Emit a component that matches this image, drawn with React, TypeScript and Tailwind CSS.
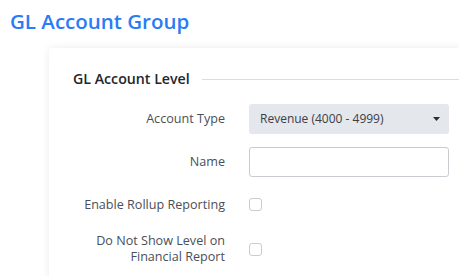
const font = { fontFamily: "'Open Sans', 'Noto Sans', sans-serif" };

const Row = ({ label, children, h }: { label: React.ReactNode; children: React.ReactNode; h: string }) => (
  <div className={`flex items-center gap-6 ${h}`}>
    <div className="w-[152px] shrink-0 text-right text-[12.6px] leading-[16px] text-[#4a4f57]">{label}</div>
    <div className="flex items-center">{children}</div>
  </div>
);

const Checkbox = () => (
  <div className="h-[13px] w-[13px] rounded-[3px] border border-[#c9ccd1] bg-white" />
);

export default function App() {
  return (
    <div className="h-[276px] w-[459px] overflow-hidden bg-white" style={font}>
      <h1 className="pl-[10px] pt-[7px] text-[20.5px] font-semibold leading-[28px] text-[#2a7bf6]">
        GL Account Group
      </h1>
      <div className="ml-[49px] mt-[13px] w-[440px] rounded-[3px] bg-white px-6 pb-8 pt-[22px] shadow-[0_0_8px_rgba(0,0,0,0.08)]">
        <div className="flex items-center gap-[12px]">
          <h2 className="text-[14.2px] font-semibold leading-[18px] text-[#22262b]">GL Account Level</h2>
          <div className="h-px flex-1 bg-[#d5dcea]" />
        </div>
        <div className="mt-[9px]">
          <Row label="Account Type" h="h-[43px]">
            <div className="flex h-[30px] w-[200px] items-center justify-between rounded-[3px] bg-[#e4e7eb] pl-[11px] pr-[9px] text-[12px] text-[#3b4047]">
              <span>Revenue (4000 - 4999)</span>
              <svg width="7" height="4" viewBox="0 0 7 4"><path d="M0 0h7L3.5 4z" fill="#2b2f35" /></svg>
            </div>
          </Row>
          <Row label="Name" h="h-[43px]">
            <div className="h-[30px] w-[200px] rounded-[3px] border border-[#c8cbd0] bg-white" />
          </Row>
          <Row label="Enable Rollup Reporting" h="h-[43px]">
            <Checkbox />
          </Row>
          <Row label={<>Do Not Show Level on<br />Financial Report</>} h="h-[46px]">
            <Checkbox />
          </Row>
        </div>
      </div>
    </div>
  );
}
